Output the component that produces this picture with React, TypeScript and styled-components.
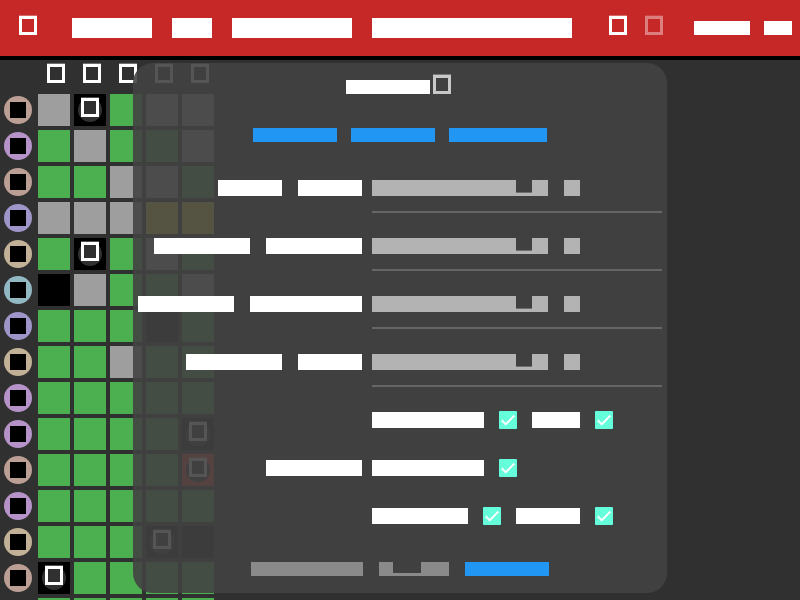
import { Fragment } from 'react';
import styled, { createGlobalStyle } from 'styled-components';

const GlobalStyle = createGlobalStyle`
  html, body {
    margin: 0;
    height: 100%;
    overflow: hidden;
    background: #303030;
    font-family: "Liberation Sans", sans-serif;
  }
`;

const Page = styled.div`
  position: relative;
  width: 800px;
  height: 600px;
  overflow: hidden;
  background: #303030;
`;

const Glyph = styled.span<{ $faded?: boolean }>`
  display: block;
  flex: none;
  box-sizing: border-box;
  width: 18px;
  height: 19px;
  border: 3px solid #fff;
  box-shadow: 0 -1px 0 rgba(255, 255, 255, 0.3);
  opacity: ${(p) => (p.$faded ? 0.4 : 1)};
`;

const Toolbar = styled.header`
  display: flex;
  align-items: center;
  height: 56px;
  padding: 0 8px 0 19px;
  box-sizing: content-box;
  border-bottom: 4px solid #000;
  background: #c62828;

  ${Glyph} {
    margin-top: -5px;
  }
`;

const NavGroup = styled.nav`
  display: flex;
  align-items: center;
  gap: 20px;
  margin-left: 35px;
`;

const ActionGroup = styled.div`
  display: flex;
  align-items: center;
  gap: 18px;
  margin-left: 37px;
`;

const AccountGroup = styled.div`
  display: flex;
  gap: 14px;
  margin-left: 31px;
`;

const Label = styled.span<{ $w: number; $h?: number }>`
  display: block;
  flex: none;
  width: ${(p) => p.$w}px;
  height: ${(p) => p.$h ?? 16}px;
  background: #fff;
`;

const Board = styled.main`
  display: grid;
  grid-template-columns: 34px repeat(5, 32px);
  grid-template-rows: 30px;
  grid-auto-rows: 32px;
  gap: 4px;
`;

const ColumnHead = styled.div`
  display: flex;
  justify-content: center;
  padding: 4px 0 0 4px;
`;

const Avatar = styled.div<{ $color: string }>`
  display: flex;
  align-items: center;
  justify-content: center;
  width: 28px;
  height: 28px;
  margin: 2px 0 0 4px;
  border-radius: 50%;
  background: ${(p) => p.$color};

  &::after {
    content: '';
    width: 16px;
    height: 16px;
    background: #000;
  }
`;

const Cell = styled.div<{ $color: string }>`
  display: flex;
  align-items: center;
  justify-content: center;
  background: ${(p) => p.$color};
`;

const CellBadge = styled.div`
  display: flex;
  justify-content: center;
  width: 24px;
  height: 24px;
  border-radius: 50%;
  background: #303030;
`;

const Dialog = styled.section`
  position: absolute;
  top: 63px;
  left: 133px;
  display: flex;
  flex-direction: column;
  box-sizing: border-box;
  width: 534px;
  height: 530px;
  padding-top: 12px;
  border-radius: 20px;
  background: rgba(66, 66, 66, 0.9);
`;

const DialogTitle = styled.div`
  display: flex;
  align-items: flex-end;
  justify-content: center;
  gap: 3px;
  padding-right: 3px;

  ${Glyph} {
    border-color: #c8c8c8;
  }
`;

const Tabs = styled.div`
  display: flex;
  justify-content: center;
  gap: 14px;
  margin: 34px 0 38px;
`;

const Tab = styled.span<{ $w: number }>`
  display: block;
  width: ${(p) => p.$w}px;
  height: 14px;
  background: #2196f3;
`;

const SettingRow = styled.div`
  display: grid;
  grid-template-columns: 229px 290px;
  column-gap: 10px;
`;

const RowLabels = styled.div`
  display: flex;
  justify-content: flex-end;
  gap: 16px;
`;

const SliderCell = styled.div`
  padding-bottom: 25px;
`;

const SliderLine = styled.div`
  display: flex;
  gap: 16px;
`;

const Slider = styled.div`
  position: relative;
  width: 176px;
  height: 16px;
  background: #b3b3b3;

  &::after {
    content: '';
    position: absolute;
    top: 0;
    right: 16px;
    width: 16px;
    height: 12px;
    border-bottom: 1px solid #6e6e6e;
    background: #404040;
  }
`;

const SliderValue = styled.span`
  display: block;
  width: 16px;
  height: 16px;
  background: #b3b3b3;
`;

const Divider = styled.hr`
  height: 2px;
  margin: 15px 0 0;
  border: 0;
  background: #666;
`;

const ToggleRow = styled.div`
  display: grid;
  grid-template-columns: 229px 290px;
  column-gap: 10px;
  align-items: center;
  height: 18px;
  margin: -1px 0 31px;
`;

const ToggleCell = styled.div`
  display: flex;
  align-items: center;
  gap: 15px;
`;

const Check = styled.span`
  display: flex;
  flex: none;
  width: 18px;
  height: 18px;
  border-radius: 1px;
  background: #64ffda;
`;

const Footer = styled.footer`
  display: flex;
  justify-content: center;
  gap: 16px;
  margin-top: 6px;
`;

const GhostButton = styled.span<{ $w: number }>`
  display: block;
  width: ${(p) => p.$w}px;
  height: 14px;
  background: #8a8a8a;
`;

const IconButton = styled(GhostButton)`
  position: relative;

  &::after {
    content: '';
    position: absolute;
    top: 0;
    left: 14px;
    width: 28px;
    height: 11px;
    background: #404040;
  }
`;

const PrimaryButton = styled.span`
  display: block;
  width: 84px;
  height: 14px;
  background: #2196f3;
`;

const BROWN = '#bc9f94';
const PURPLE = '#b592c7';
const INDIGO = '#9f95c8';
const BEIGE = '#c2b196';
const CYAN = '#92b8c3';

const G = '#4caf50';
const A = '#9e9e9e';
const K = '#000000';
const Y = '#ffeb3b';
const R = '#f44336';

type CellData = { color: string; badge?: boolean };

const c = (color: string, badge = false): CellData => ({ color, badge });

const rows: { avatar: string; cells: CellData[] }[] = [
  { avatar: BROWN, cells: [c(A), c(K, true), c(G), c(A), c(A)] },
  { avatar: PURPLE, cells: [c(G), c(A), c(G), c(G), c(A)] },
  { avatar: BROWN, cells: [c(G), c(G), c(A), c(A), c(G)] },
  { avatar: INDIGO, cells: [c(A), c(A), c(A), c(Y), c(Y)] },
  { avatar: BEIGE, cells: [c(G), c(K, true), c(G), c(A), c(G)] },
  { avatar: CYAN, cells: [c(K), c(A), c(G), c(G), c(A)] },
  { avatar: INDIGO, cells: [c(G), c(G), c(G), c(K), c(G)] },
  { avatar: BEIGE, cells: [c(G), c(G), c(A), c(G), c(G)] },
  { avatar: PURPLE, cells: [c(G), c(G), c(G), c(G), c(G)] },
  { avatar: PURPLE, cells: [c(G), c(G), c(G), c(G), c(K, true)] },
  { avatar: BROWN, cells: [c(G), c(G), c(G), c(G), c(R, true)] },
  { avatar: PURPLE, cells: [c(G), c(G), c(G), c(G), c(G)] },
  { avatar: BEIGE, cells: [c(G), c(G), c(G), c(K, true), c(K)] },
  { avatar: BROWN, cells: [c(K, true), c(G), c(G), c(G), c(G)] },
  { avatar: BROWN, cells: [c(G), c(G), c(G), c(G), c(G)] },
];

const sliderRows = [
  [64, 64],
  [96, 96],
  [96, 112],
  [96, 64],
];

const CheckMark = () => (
  <svg width="18" height="18" viewBox="0 0 24 24" fill="#fff" stroke="#fff" strokeWidth="0.9">
    <path d="M9 16.17L4.83 12l-1.42 1.41L9 19 21 7l-1.41-1.41z" />
  </svg>
);

export default function App() {
  return (
    <Page>
      <GlobalStyle />
      <Toolbar>
        <Glyph />
        <NavGroup>
          <Label $w={80} $h={20} />
          <Label $w={40} $h={20} />
          <Label $w={120} $h={20} />
          <Label $w={200} $h={20} />
        </NavGroup>
        <ActionGroup>
          <Glyph />
          <Glyph $faded />
        </ActionGroup>
        <AccountGroup>
          <Label $w={56} $h={14} />
          <Label $w={28} $h={14} />
        </AccountGroup>
      </Toolbar>

      <Board>
        <div />
        {[0, 1, 2, 3, 4].map((i) => (
          <ColumnHead key={i}>
            <Glyph />
          </ColumnHead>
        ))}
        {rows.map((row, r) => (
          <Fragment key={r}>
            <Avatar $color={row.avatar} />
            {row.cells.map((cell, i) => (
              <Cell key={i} $color={cell.color}>
                {cell.badge && (
                  <CellBadge>
                    <Glyph />
                  </CellBadge>
                )}
              </Cell>
            ))}
          </Fragment>
        ))}
      </Board>

      <Dialog>
        <DialogTitle>
          <Label $w={84} $h={14} />
          <Glyph />
        </DialogTitle>
        <Tabs>
          <Tab $w={84} />
          <Tab $w={84} />
          <Tab $w={98} />
        </Tabs>

        {sliderRows.map(([a, b], i) => (
          <SettingRow key={i}>
            <RowLabels>
              <Label $w={a} />
              <Label $w={b} />
            </RowLabels>
            <SliderCell>
              <SliderLine>
                <Slider />
                <SliderValue />
              </SliderLine>
              <Divider />
            </SliderCell>
          </SettingRow>
        ))}

        <ToggleRow>
          <div />
          <ToggleCell>
            <Label $w={112} />
            <Check>
              <CheckMark />
            </Check>
            <Label $w={48} />
            <Check>
              <CheckMark />
            </Check>
          </ToggleCell>
        </ToggleRow>
        <ToggleRow>
          <RowLabels>
            <Label $w={96} />
          </RowLabels>
          <ToggleCell>
            <Label $w={112} />
            <Check>
              <CheckMark />
            </Check>
          </ToggleCell>
        </ToggleRow>
        <ToggleRow>
          <div />
          <ToggleCell>
            <Label $w={96} />
            <Check>
              <CheckMark />
            </Check>
            <Label $w={64} />
            <Check>
              <CheckMark />
            </Check>
          </ToggleCell>
        </ToggleRow>

        <Footer>
          <GhostButton $w={112} />
          <IconButton $w={70} />
          <PrimaryButton />
        </Footer>
      </Dialog>
    </Page>
  );
}
